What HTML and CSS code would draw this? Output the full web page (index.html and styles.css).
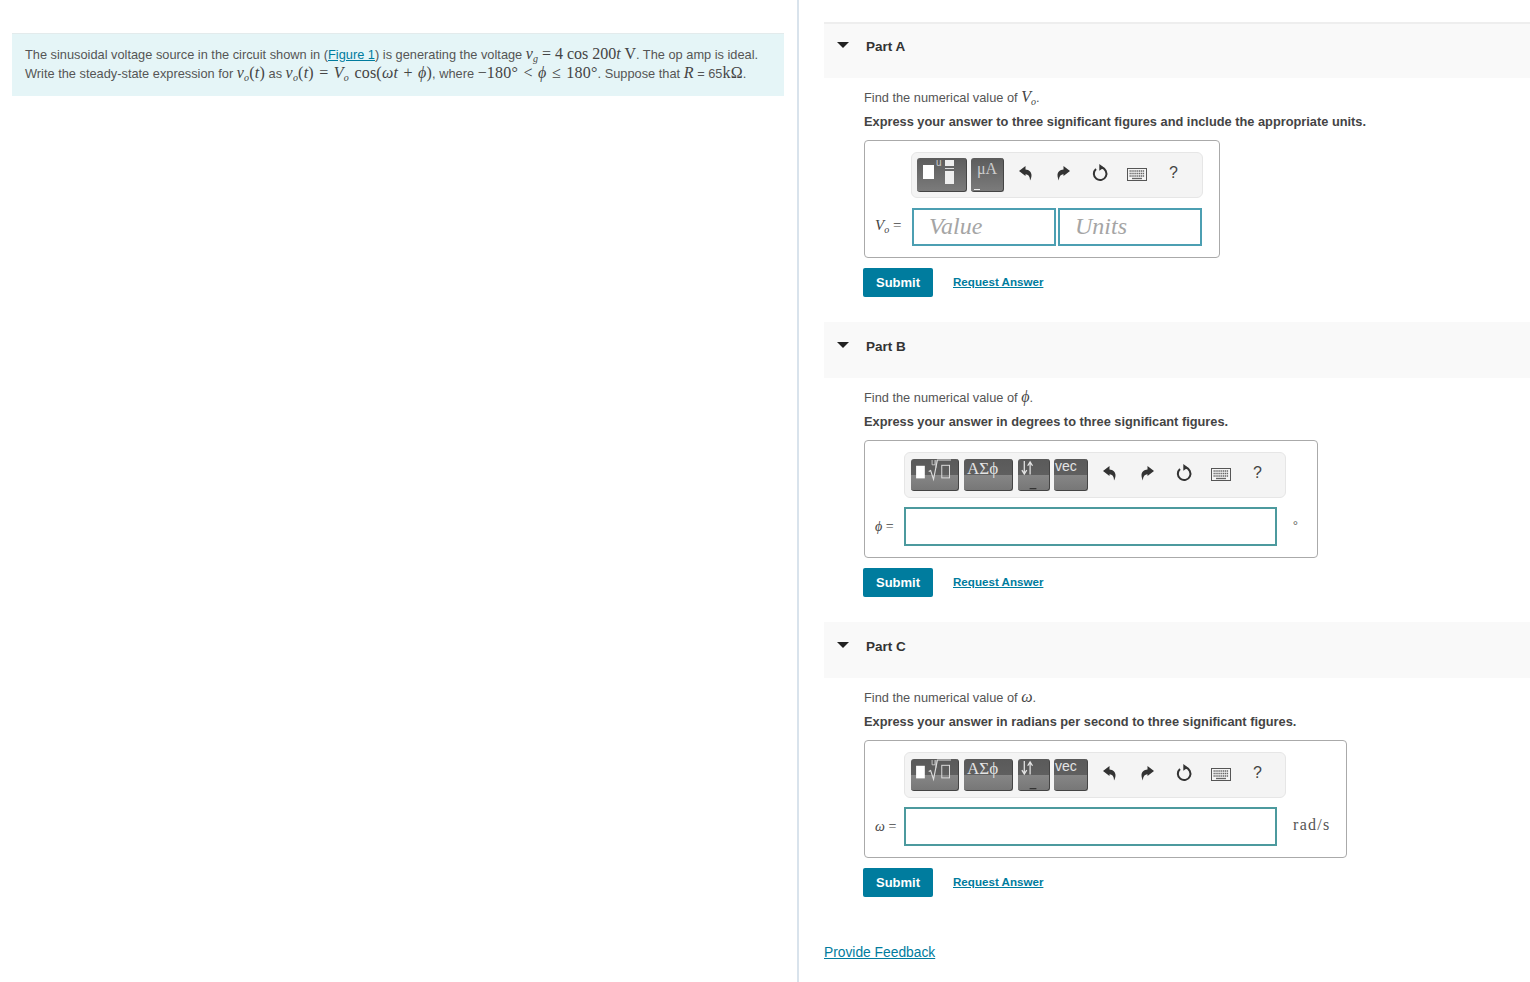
FILE: index.html
```html
<!DOCTYPE html>
<html lang="en">
<head>
    <meta charset="UTF-8">
    <title>Op amp circuit problem</title>
    <link rel="stylesheet" href="styles.css">
</head>
<body>
    <svg class="icon-defs" width="0" height="0">
        <symbol id="i-undo" viewBox="0 0 16 16">
            <path d="M1 6 7.500 1v3.500c3.500.2 6 2.500 6 5.500 0 2-.5 3.800-1.500 5.500 0-3-.8-5.800-4.500-6.200V11z"/>
        </symbol>
        <symbol id="i-redo" viewBox="0 0 16 16">
            <path d="M15 6 8.500 1v3.500c-3.500.2-6 2.500-6 5.500 0 2 .5 3.800 1.500 5.500 0-3 .8-5.800 4.500-6.200V11z"/>
        </symbol>
        <symbol id="i-reset" viewBox="0 0 18 18">
            <path d="M10.500 3.600A6.300 6.300 0 1 1 5 5" fill="none" stroke="#333" stroke-width="2"/>
            <path d="M8.300 0 13 3.600 8.300 6.800z" fill="#333"/>
        </symbol>
        <symbol id="i-keys" viewBox="0 0 20 13">
            <rect x=".5" y=".5" width="19" height="12" fill="#f4f4f4" stroke="#555"/>
            <path d="M2.500 3h15M2.500 5.500h15M2.500 8h15" stroke="#666" stroke-width="1.400" stroke-dasharray="1.300 .6"/>
            <path d="M5 10.500h10" stroke="#666" stroke-width="1.300"/>
        </symbol>
        <symbol id="i-root" viewBox="0 0 48 32">
            <rect x="5" y="7" width="9" height="13" fill="#fff"/>
            <path d="M18 13l2-1 3 9 4-20h14" fill="none" stroke="#ddd" stroke-width="1.200"/>
            <path d="M21.500 1v5h3V1M25.500 1v8" fill="none" stroke="#ddd" stroke-width=".8"/>
            <rect x="31.500" y="6.500" width="8" height="13" fill="none" stroke="#ddd"/>
        </symbol>
        <symbol id="i-arrows" viewBox="0 0 32 32">
            <path d="M6.500 2v12M4 11.500l2.500 4 2.500-4M12.500 16V4M10 7l2.500-4 2.500 4" fill="none" stroke="#e4e4e4" stroke-width="1.300"/>
            <path d="M12 30.500h7" stroke="#333" stroke-width="1.200"/>
        </symbol>
    </svg>

    <div class="page">
        <section class="left-pane">
            <div class="intro">
                The sinusoidal voltage source in the circuit shown in (<a href="#">Figure 1</a>) is generating the voltage
                <span class="m tight"><i>v<sub>g</sub></i> = 4 cos 200<i>t</i> V</span>. The op amp is ideal.<br>
                Write the steady-state expression for <span class="m"><i>v<sub>o</sub></i>(<i>t</i>)</span> as
                <span class="m"><i>v<sub>o</sub></i>(<i>t</i>) = <i>V<sub>o</sub></i> cos(<i>ωt</i> + <i>ϕ</i>)</span>, where
                <span class="m">−180° &lt; <i>ϕ</i> ≤ 180°</span>. Suppose that <span class="m"><i>R</i></span> = 65<span class="m">kΩ</span>.
            </div>
        </section>

        <section class="right-pane">
            <div class="part">
                <div class="part-head"><span class="caret"></span><h2>Part A</h2></div>
                <div class="part-body">
                    <p class="ask">Find the numerical value of <span class="m big"><i>V<sub>o</sub></i></span>.</p>
                    <p class="how">Express your answer to three significant figures and include the appropriate units.</p>
                    <div class="answer answer-a">
                        <div class="toolbar toolbar-a">
                            <div class="tpl tpl-frac">
                                <span class="sq sq-big"></span><span class="sup-mark">u</span>
                                <span class="frac"><span class="sq-sm"></span><span class="frac-line"></span><span class="sq-sm tall"></span></span>
                            </div>
                            <div class="tpl tpl-unit"><span>μA</span><span class="dash"></span></div>
                            <div class="tools">
                                <svg class="tool-arrow"><use href="#i-undo"/></svg>
                                <svg class="tool-arrow"><use href="#i-redo"/></svg>
                                <svg class="tool-reset"><use href="#i-reset"/></svg>
                                <svg class="tool-keys"><use href="#i-keys"/></svg>
                                <span class="tool-help">?</span>
                            </div>
                        </div>
                        <div class="entry">
                            <label class="m lbl"><i>V<sub>o</sub></i> =</label>
                            <div class="field half">Value</div>
                            <div class="field half">Units</div>
                        </div>
                    </div>
                    <div class="actions"><button class="submit">Submit</button><a href="#" class="request">Request Answer</a></div>
                </div>
            </div>

            <div class="part">
                <div class="part-head"><span class="caret"></span><h2>Part B</h2></div>
                <div class="part-body">
                    <p class="ask">Find the numerical value of <span class="m big"><i>ϕ</i></span>.</p>
                    <p class="how">Express your answer in degrees to three significant figures.</p>
                    <div class="answer answer-b">
                        <div class="toolbar toolbar-b">
                            <div class="tpl tpl-root"><svg class="tpl-svg"><use href="#i-root"/></svg></div>
                            <div class="tpl tpl-greek">ΑΣϕ</div>
                            <div class="tpl tpl-arrows"><svg class="tpl-svg"><use href="#i-arrows"/></svg></div>
                            <div class="tpl tpl-vec">vec</div>
                            <div class="tools">
                                <svg class="tool-arrow"><use href="#i-undo"/></svg>
                                <svg class="tool-arrow"><use href="#i-redo"/></svg>
                                <svg class="tool-reset"><use href="#i-reset"/></svg>
                                <svg class="tool-keys"><use href="#i-keys"/></svg>
                                <span class="tool-help">?</span>
                            </div>
                        </div>
                        <div class="entry">
                            <label class="m lbl short"><i>ϕ</i> =</label>
                            <div class="field wide"></div>
                            <span class="unit unit-deg">°</span>
                        </div>
                    </div>
                    <div class="actions"><button class="submit">Submit</button><a href="#" class="request">Request Answer</a></div>
                </div>
            </div>

            <div class="part">
                <div class="part-head"><span class="caret"></span><h2>Part C</h2></div>
                <div class="part-body">
                    <p class="ask">Find the numerical value of <span class="m big"><i>ω</i></span>.</p>
                    <p class="how">Express your answer in radians per second to three significant figures.</p>
                    <div class="answer answer-c">
                        <div class="toolbar toolbar-b">
                            <div class="tpl tpl-root"><svg class="tpl-svg"><use href="#i-root"/></svg></div>
                            <div class="tpl tpl-greek">ΑΣϕ</div>
                            <div class="tpl tpl-arrows"><svg class="tpl-svg"><use href="#i-arrows"/></svg></div>
                            <div class="tpl tpl-vec">vec</div>
                            <div class="tools">
                                <svg class="tool-arrow"><use href="#i-undo"/></svg>
                                <svg class="tool-arrow"><use href="#i-redo"/></svg>
                                <svg class="tool-reset"><use href="#i-reset"/></svg>
                                <svg class="tool-keys"><use href="#i-keys"/></svg>
                                <span class="tool-help">?</span>
                            </div>
                        </div>
                        <div class="entry">
                            <label class="m lbl short"><i>ω</i> =</label>
                            <div class="field wide"></div>
                            <span class="unit unit-rad">rad/s</span>
                        </div>
                    </div>
                    <div class="actions"><button class="submit">Submit</button><a href="#" class="request">Request Answer</a></div>
                </div>
            </div>

            <a href="#" class="feedback">Provide Feedback</a>
        </section>
    </div>
</body>
</html>
```

FILE: styles.css
```css
body {
    margin: 0;
    padding: 0;
    font-family: "Liberation Sans", Arial, sans-serif;
    font-size: 12.8px;
    color: #555;
    background: #fff;
}

a {
    color: #007c9e;
}

.icon-defs {
    display: block;
    height: 0;
}

.page {
    display: flex;
    height: 982px;
    overflow: hidden;
}

.left-pane {
    width: 799px;
    flex: none;
    box-sizing: border-box;
    padding: 33px 13px 0 12px;
    border-right: 2px solid #d9e3ec;
}

.intro {
    height: 63px;
    box-sizing: border-box;
    padding: 11px 13px 0;
    background: #e5f5f7;
    border-top: 1px solid #e3ebec;
    line-height: 19px;
    white-space: nowrap;
}

.m {
    font-family: "Liberation Serif", "DejaVu Serif", serif;
    font-size: 14px;
    color: #444;
}

.intro .m {
    font-size: 16px;
    line-height: 0;
    letter-spacing: .2px;
    word-spacing: 1.2px;
}

.intro .m.tight {
    letter-spacing: 0;
    word-spacing: 0;
}

.m.big {
    font-size: 16px;
}

.m sub {
    font-size: 10px;
    line-height: 0;
    vertical-align: -3px;
}

.right-pane {
    flex: 1;
    padding: 22px 0 0 25px;
    min-width: 0;
}

.part {
    height: 300px;
}

.part-head {
    height: 56px;
    box-sizing: border-box;
    display: flex;
    align-items: center;
    padding: 0 0 10px 13px;
    background: #f9f9f9;
    border-top: 2px solid #f9f9f9;
}

.part:first-child .part-head {
    border-top-color: #eee;
}

.caret {
    width: 0;
    height: 0;
    border-left: 6px solid transparent;
    border-right: 6px solid transparent;
    border-top: 6px solid #222;
    margin: 0 17px 2px 0;
}

.part-head h2 {
    margin: 0;
    font-size: 13.500px;
    font-weight: bold;
    color: #333;
}

.part-body {
    padding: 9px 0 0 40px;
}

.ask {
    margin: 0;
    height: 25px;
    line-height: 19px;
}

.how {
    margin: 0 0 9px;
    line-height: 19px;
    font-weight: bold;
    color: #444;
}

.answer {
    box-sizing: border-box;
    height: 118px;
    border: 1px solid #aaa;
    border-radius: 4px;
    padding: 11px 0 0;
}

.answer-a {
    width: 356px;
    padding-left: 46px;
}

.answer-b {
    width: 454px;
    padding-left: 39px;
}

.answer-c {
    width: 483px;
    padding-left: 39px;
}

.toolbar {
    display: flex;
    box-sizing: border-box;
    height: 46px;
    padding: 6px 0 0 6px;
    background: #f4f4f4;
    border: 1px solid #e6e6e6;
    border-radius: 6px;
}

.toolbar-a {
    width: 292px;
    padding: 5px 0 0 5px;
}

.toolbar-b {
    width: 382px;
}

.tpl {
    position: relative;
    box-sizing: border-box;
    height: 32px;
    margin-right: 4px;
    color: #eee;
    border-radius: 3px;
    border-right: 1px solid #444;
    border-bottom: 1px solid #444;
    overflow: hidden;
}

.toolbar-a .tpl {
    height: 34px;
    background: linear-gradient(#5c5c5c, #7b7b7b);
}

.toolbar-b .tpl {
    background: linear-gradient(#5a5a5a 0, #5f5f5f 50%, #868686 52%, #777 100%);
}

.tpl-svg {
    display: block;
    width: 100%;
    height: 100%;
}

.sq {
    position: absolute;
    left: 6px;
    top: 8px;
    width: 9px;
    height: 13px;
    background: #fff;
}

.sq-big {
    top: 7px;
    width: 11px;
    height: 14px;
}

.sup-mark {
    position: absolute;
    left: 19px;
    top: -1px;
    font-size: 10px;
    color: #ccc;
}

.frac {
    position: absolute;
    left: 28px;
    top: 2px;
    width: 9px;
}

.sq-sm {
    display: block;
    height: 6px;
    background: #eee;
}

.sq-sm.tall {
    height: 13px;
}

.frac-line {
    display: block;
    height: 1px;
    margin: 2px 0;
    background: #ddd;
}

.tpl-frac {
    width: 50px;
}

.tpl-unit {
    width: 33px;
    text-align: center;
    font-family: "Liberation Serif", serif;
    font-size: 16px;
    line-height: 21px;
    color: #ccc;
}

.tpl-unit .dash {
    position: absolute;
    left: 3px;
    bottom: 1px;
    width: 6px;
    height: 1px;
    background: #eee;
}

.tpl-root {
    width: 48px;
    margin-right: 5px;
}

.tpl-greek {
    width: 49px;
    margin-right: 5px;
    padding-left: 3px;
    font-family: "Liberation Serif", serif;
    font-size: 17px;
    line-height: 19px;
    color: #e4e4e4;
}

.tpl-arrows {
    width: 32px;
}

.tpl-vec {
    width: 34px;
    padding-left: 1px;
    font-size: 14px;
    line-height: 15px;
    color: #e4e4e4;
}

.tools {
    display: flex;
    align-items: center;
    height: 28px;
    padding-left: 10px;
}

.toolbar-a .tools {
    height: 30px;
    padding-left: 10px;
}

.tool-arrow {
    width: 16px;
    height: 16px;
    fill: #333;
}

.tool-arrow + .tool-arrow {
    margin-left: 21px;
}

.tool-reset {
    width: 18px;
    height: 18px;
    margin-left: 20px;
}

.tool-keys {
    width: 20px;
    height: 13px;
    margin-left: 18px;
    margin-top: 2px;
}

.tool-help {
    margin-left: 22px;
    font-size: 16px;
    color: #444;
}

.entry {
    display: flex;
    align-items: center;
    margin: 9px 0 0 -36px;
}

.lbl {
    box-sizing: border-box;
    width: 37px;
    font-size: 15px;
    white-space: nowrap;
}

.answer-a .lbl {
    margin-bottom: 3px;
}

.lbl.short {
    width: 29px;
    font-size: 14px;
}

.answer-b .entry,
.answer-c .entry {
    margin-left: -29px;
}

.field {
    box-sizing: border-box;
    height: 39px;
    border: 2px solid #4c9fb2;
    font-family: "Liberation Serif", serif;
    font-style: italic;
    font-size: 24px;
    line-height: 33px;
    color: #a5a5a5;
    padding-left: 15px;
    background: #fff;
}

.half {
    width: 144px;
    height: 38px;
    margin-right: 2px;
}

.answer-a .entry {
    margin-top: 10px;
}

.wide {
    width: 373px;
    border-color: #4c9a9e;
}

.unit {
    margin-left: 16px;
    font-family: "Liberation Serif", serif;
    font-size: 16px;
    letter-spacing: 1.300px;
    color: #555;
}

.unit-rad {
    margin-bottom: 3px;
}

.unit-deg {
    margin-bottom: 2px;
    font-size: 12px;
}

.actions {
    display: flex;
    align-items: center;
    margin: 10px 0 0 -1px;
}

.submit {
    width: 70px;
    height: 29px;
    padding: 0;
    border: none;
    border-radius: 2px;
    background: #007c9e;
    color: #fff;
    font-family: "Liberation Sans", Arial, sans-serif;
    font-size: 13px;
    font-weight: bold;
}

.request {
    margin: 0 0 3px 20px;
    font-size: 11.600px;
    font-weight: bold;
}

.feedback {
    display: inline-block;
    margin-top: 23px;
    font-size: 13.800px;
}
```
